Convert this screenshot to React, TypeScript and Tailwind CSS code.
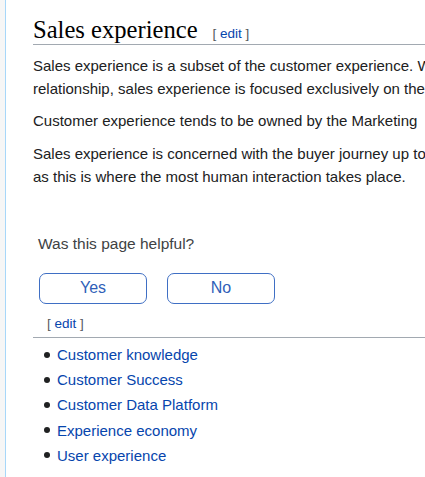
import React from "react";

const sans = { fontFamily: '"Liberation Sans", Arial, sans-serif' };

export default function App() {
  const links = [
    "Customer knowledge",
    "Customer Success",
    "Customer Data Platform",
    "Experience economy",
    "User experience",
  ];
  return (
    <div className="flex h-[477px] w-[425px] overflow-hidden bg-white" style={sans}>
      <div className="w-[5px] shrink-0 bg-[#f6f6f6]" />
      <div className="w-[1px] shrink-0 bg-[#a7d7f9]" />
      <div className="flex-1 min-w-0 pl-[27px]">
        <h2
          className="mt-[16.5px] flex items-baseline whitespace-nowrap border-b border-[#a2a9b1] pb-[2px] text-[24.6px] leading-[25px] text-black"
          style={{ fontFamily: '"Liberation Serif", "Times New Roman", serif' }}
        >
          <span>Sales experience</span>
          <span className="ml-[15px] text-[13.5px] leading-none text-[#54595d]" style={sans}>
            [ <span className="text-[#0645ad]">edit</span> ]
          </span>
        </h2>
        <div className="text-[15px] leading-[22.5px] text-[#202122] whitespace-nowrap">
          <p className="mt-[10.5px]">
            Sales experience is a subset of the customer experience. While customer experience
            <br />
            relationship, sales experience is focused exclusively on the sales interaction
          </p>
          <p className="mt-[9.5px]">
            Customer experience tends to be owned by the Marketing
          </p>
          <p className="mt-[9.5px] leading-[23.5px]">
            Sales experience is concerned with the buyer journey up to the point of purchase,
            <br />
            as this is where the most human interaction takes place.
          </p>
        </div>
        <div className="pl-[5px] pt-[45px]">
          <div className="text-[15.5px] leading-[20px] text-[#404244]">Was this page helpful?</div>
          <div className="mt-[19px] flex gap-[20px] pl-[1px]">
            <button className="h-[31px] w-[108px] rounded-[7px] border border-[#3f6fc4] bg-white text-[16px] text-[#2f5fb8]">
              Yes
            </button>
            <button className="h-[31px] w-[108px] rounded-[7px] border border-[#3f6fc4] bg-white text-[16px] text-[#2f5fb8]">
              No
            </button>
          </div>
        </div>
        <div className="mt-[10px] border-b border-[#a2a9b1] pb-[3px] pl-[14px] text-[13.5px] leading-[20px] text-[#54595d]">
          [ <span className="text-[#0645ad]">edit</span> ]
        </div>
        <ul className="mt-[4.5px] pl-[11px] text-[15px] leading-[25.2px]">
          {links.map((l) => (
            <li key={l} className="flex items-center">
              <span className="mr-[7px] h-[6px] w-[6px] shrink-0 rounded-full bg-[#202122]" />
              <span className="text-[#0645ad]">{l}</span>
            </li>
          ))}
        </ul>
      </div>
    </div>
  );
}
